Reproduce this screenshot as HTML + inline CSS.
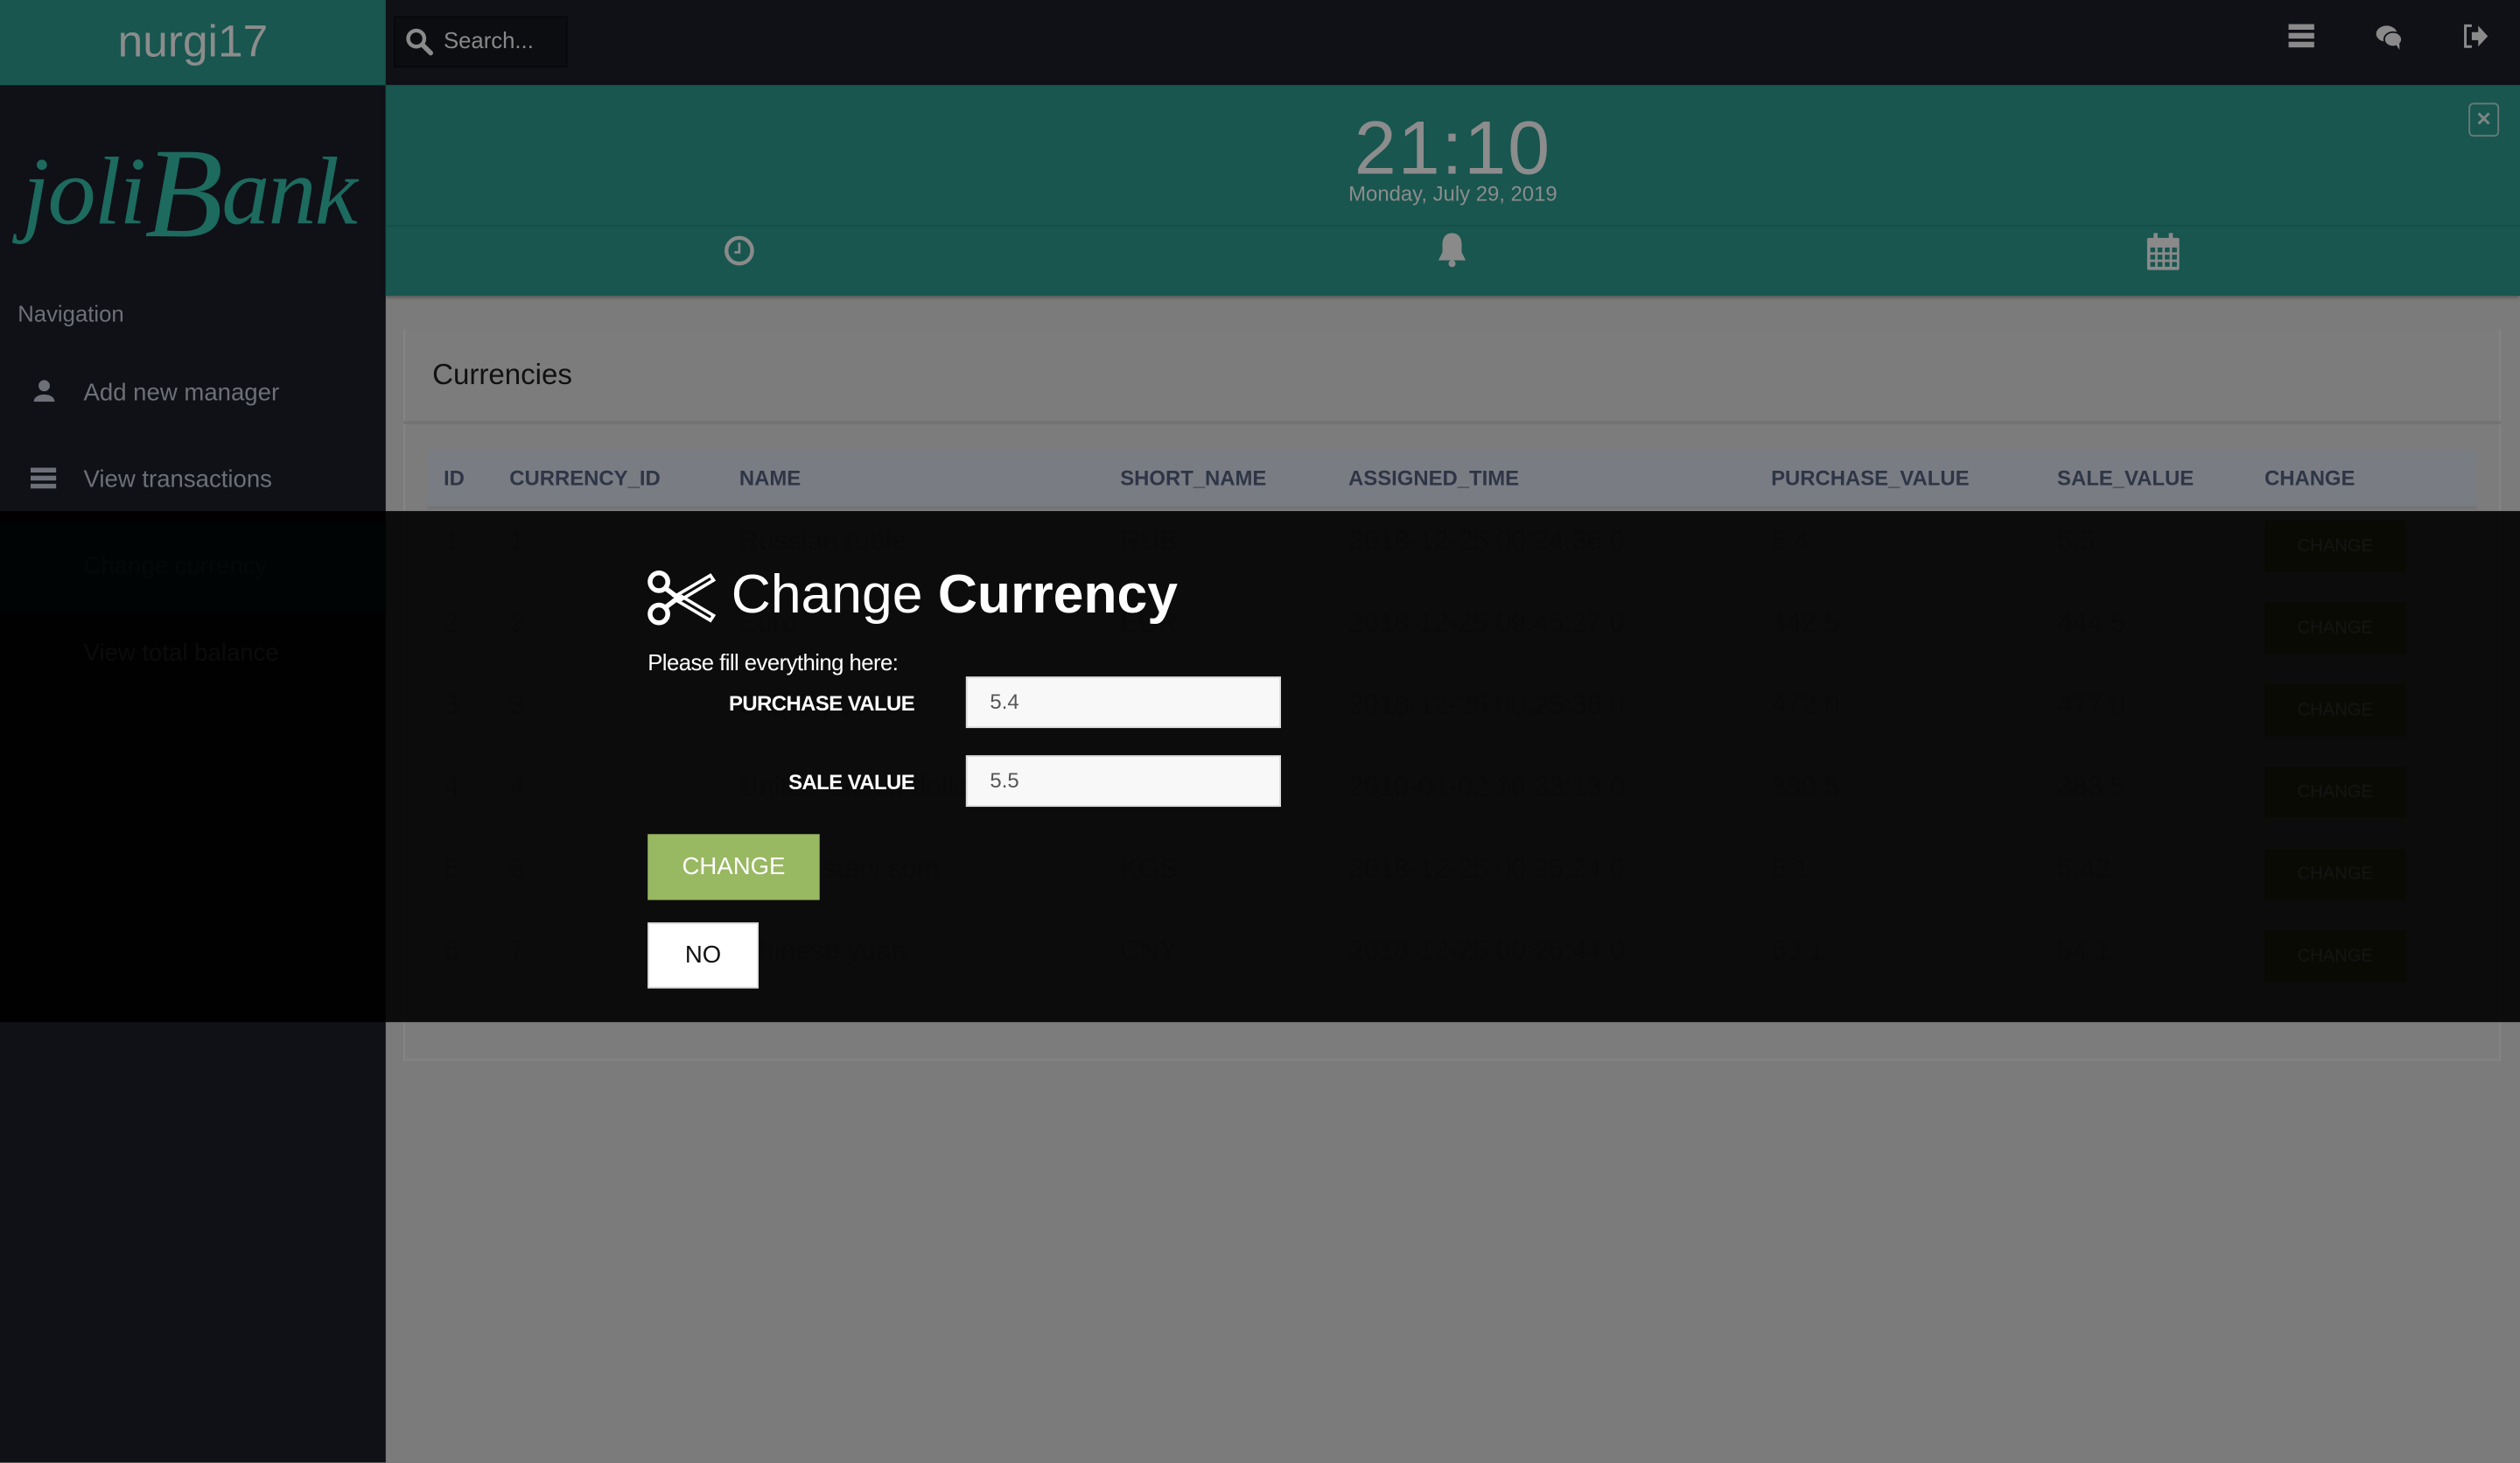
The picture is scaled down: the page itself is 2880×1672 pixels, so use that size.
<!DOCTYPE html>
<html><head><meta charset="utf-8"><style>
html,body{margin:0;padding:0;width:2880px;height:1672px;overflow:hidden;background:#7b7b7b}
#s{position:absolute;left:0;top:0;width:1568px;height:910px;transform:scale(1.836735);transform-origin:0 0;font-family:"Liberation Sans",sans-serif;background:#7b7b7b;overflow:hidden}
.a{position:absolute}
.side{left:0;top:0;width:240px;height:910px;background:#0f1117}
.nav{color:#6e7079;font-size:14px}
.hd{font-weight:bold;font-size:13px;color:#2e3547;top:290px}
.rw{font-size:17px;color:#0a0a0a}
.cb{width:88px;height:32px;background:#0a0a05;color:#141414;font-size:11px;text-align:center;line-height:32px}
</style></head><body><div id="s">
<div class="a side"></div>
<div class="a" style="left:0;top:0;width:240px;height:53px;background:#18564f;color:#8c8c8c;font-size:28px;text-align:center;line-height:52px">nurgi17</div>
<div class="a" style="left:240px;top:0;width:1328px;height:53px;background:#0f1117"></div>
<div class="a" style="left:245px;top:10px;width:108px;height:32px;background:#0b0d11;border:1px solid #07080b;box-sizing:border-box"></div>
<svg class="a" style="left:252px;top:17px" width="18" height="18" viewBox="0 0 18 18"><circle cx="7" cy="7" r="5" fill="none" stroke="#8a8a8a" stroke-width="2.4"/><path d="M11 11l5 5" stroke="#8a8a8a" stroke-width="3" stroke-linecap="round"/></svg>
<div class="a" style="left:276px;top:17px;color:#888;font-size:14px">Search...</div>
<svg class="a" style="left:1424px;top:15px" width="16" height="15"><rect x="0" y="0" width="16" height="3.5" fill="#8a8a8a"/><rect x="0" y="5.5" width="16" height="3.5" fill="#8a8a8a"/><rect x="0" y="11" width="16" height="3.5" fill="#8a8a8a"/></svg>
<svg class="a" style="left:1478px;top:15px" width="17" height="16"><ellipse cx="7" cy="6" rx="6.5" ry="5" fill="#8a8a8a"/><ellipse cx="11" cy="9.5" rx="5.5" ry="4.5" fill="#8a8a8a" stroke="#0f1117"/><path d="M13 13l2 3 0-4z" fill="#8a8a8a"/></svg>
<svg class="a" style="left:1533px;top:15px" width="15" height="15"><path d="M5 1H1v13h4" fill="none" stroke="#8a8a8a" stroke-width="1.6"/><path d="M5 5h4V1l6 6.5-6 6.5V10H5z" fill="#8a8a8a"/></svg>
<div class="a" style="left:14px;top:68px;color:#1d6a5f;font-family:'Liberation Serif',serif;font-style:italic;font-size:60px;letter-spacing:-1px">joli<span style="font-size:80px;position:relative;top:8px">B</span>ank</div>
<div class="a nav" style="left:11px;top:187px">Navigation</div>
<svg class="a" style="left:21px;top:236px" width="13" height="14"><circle cx="6.5" cy="4" r="3.5" fill="#6e7079"/><path d="M0 14c0-6 13-6 13 0z" fill="#6e7079"/></svg>
<div class="a nav" style="left:52px;top:236px;font-size:15px">Add new manager</div>
<svg class="a" style="left:19px;top:291px" width="16" height="13"><rect y="0" width="16" height="3" fill="#6e7079"/><rect y="5" width="16" height="3" fill="#6e7079"/><rect y="10" width="16" height="3" fill="#6e7079"/></svg>
<div class="a nav" style="left:52px;top:290px;font-size:15px">View transactions</div>
<div class="a" style="left:0;top:326px;width:240px;height:54px;background:#10302c"></div>
<div class="a nav" style="left:52px;top:344px;font-size:15px;color:#1f5a52">Change currency</div>
<div class="a nav" style="left:52px;top:398px;font-size:15px">View total balance</div>
<div class="a" style="left:240px;top:53px;width:1328px;height:131px;background:#18564f;box-shadow:0 1px 2px rgba(0,0,0,.3)"></div>
<div class="a" style="left:240px;top:140px;width:1328px;height:1px;background:#145049"></div>
<div class="a" style="left:240px;top:64px;width:1328px;text-align:center;color:#8c8c8c;font-size:47px;letter-spacing:1px">21:10</div>
<div class="a" style="left:240px;top:113px;width:1328px;text-align:center;color:#8c8c8c;font-size:13px">Monday, July 29, 2019</div>
<div class="a" style="left:1536px;top:64px;width:19px;height:21px;border:1px solid #6a7a77;border-radius:3px;box-sizing:border-box;color:#7a8583;font-size:12px;text-align:center;line-height:18px;font-weight:bold">✕</div>
<svg class="a" style="left:450px;top:146px" width="20" height="20"><circle cx="10" cy="10" r="8" fill="none" stroke="#8a8a8a" stroke-width="2.4"/><path d="M10 5v6H7" fill="none" stroke="#8a8a8a" stroke-width="1.5"/></svg>
<svg class="a" style="left:893px;top:144px" width="21" height="24"><path d="M10.5 1c-4 0-6 3-6 7v5L2 18h17l-2.5-5V8c0-4-2-7-6-7z" fill="#8a8a8a"/><circle cx="10.5" cy="20" r="2.2" fill="#8a8a8a"/></svg>
<svg class="a" style="left:1335px;top:144px" width="22" height="25"><rect x="1" y="4" width="20" height="20" rx="1" fill="#8a8a8a"/><rect x="5" y="1" width="2.5" height="6" fill="#8a8a8a"/><rect x="14.5" y="1" width="2.5" height="6" fill="#8a8a8a"/><g fill="#18564f"><rect x="3" y="10" width="3" height="3"/><rect x="7.5" y="10" width="3" height="3"/><rect x="12" y="10" width="3" height="3"/><rect x="16.5" y="10" width="3" height="3"/><rect x="3" y="14.5" width="3" height="3"/><rect x="7.5" y="14.5" width="3" height="3"/><rect x="12" y="14.5" width="3" height="3"/><rect x="16.5" y="14.5" width="3" height="3"/><rect x="3" y="19" width="3" height="3"/><rect x="7.5" y="19" width="3" height="3"/><rect x="12" y="19" width="3" height="3"/><rect x="16.5" y="19" width="3" height="3"/></g></svg>
<div class="a" style="left:251px;top:205px;width:1305px;height:455px;border:1px solid #858585;border-top:none;box-sizing:border-box;background:#7c7c7c"></div>
<div class="a" style="left:251px;top:262px;width:1305px;height:2px;background:#737373"></div>
<div class="a" style="left:269px;top:223px;font-size:18px;color:#111">Currencies</div>
<div class="a" style="left:266px;top:280px;width:1275px;height:35px;background:#797c82;border-bottom:2px solid #737373"></div>
<div class="a hd" style="left:276px">ID</div><div class="a hd" style="left:317px">CURRENCY_ID</div><div class="a hd" style="left:460px">NAME</div><div class="a hd" style="left:697px">SHORT_NAME</div><div class="a hd" style="left:839px">ASSIGNED_TIME</div><div class="a hd" style="left:1102px">PURCHASE_VALUE</div><div class="a hd" style="left:1280px">SALE_VALUE</div><div class="a hd" style="left:1409px">CHANGE</div>
<div class="a" style="left:0;top:318px;width:1568px;height:318px;background:rgba(0,0,0,.9)"></div>
<div class="a rw" style="left:276px;top:327px">1</div><div class="a rw" style="left:317px;top:327px">1</div><div class="a rw" style="left:460px;top:327px">Russian ruble</div><div class="a rw" style="left:697px;top:327px">RUB</div><div class="a rw" style="left:839px;top:327px">2018-12-25 00:24:36.0</div><div class="a rw" style="left:1102px;top:327px">5.4</div><div class="a rw" style="left:1280px;top:327px">5.5</div><div class="a cb" style="left:1409px;top:324px">CHANGE</div>
<div class="a rw" style="left:276px;top:378px">2</div><div class="a rw" style="left:317px;top:378px">2</div><div class="a rw" style="left:460px;top:378px">Euro</div><div class="a rw" style="left:697px;top:378px">EUR</div><div class="a rw" style="left:839px;top:378px">2018-12-25 09:45:27.0</div><div class="a rw" style="left:1102px;top:378px">442.5</div><div class="a rw" style="left:1280px;top:378px">444.5</div><div class="a cb" style="left:1409px;top:375px">CHANGE</div>
<div class="a rw" style="left:276px;top:429px">3</div><div class="a rw" style="left:317px;top:429px">3</div><div class="a rw" style="left:460px;top:429px">British pound</div><div class="a rw" style="left:697px;top:429px">GBP</div><div class="a rw" style="left:839px;top:429px">2018-12-25 00:25:38.0</div><div class="a rw" style="left:1102px;top:429px">472.0</div><div class="a rw" style="left:1280px;top:429px">477.0</div><div class="a cb" style="left:1409px;top:426px">CHANGE</div>
<div class="a rw" style="left:276px;top:480px">4</div><div class="a rw" style="left:317px;top:480px">4</div><div class="a rw" style="left:460px;top:480px">United States dollar</div><div class="a rw" style="left:697px;top:480px">USD</div><div class="a rw" style="left:839px;top:480px">2019-01-02 16:33:13.0</div><div class="a rw" style="left:1102px;top:480px">380.5</div><div class="a rw" style="left:1280px;top:480px">383.5</div><div class="a cb" style="left:1409px;top:477px">CHANGE</div>
<div class="a rw" style="left:276px;top:531px">5</div><div class="a rw" style="left:317px;top:531px">6</div><div class="a rw" style="left:460px;top:531px">Kyrgyzstani som</div><div class="a rw" style="left:697px;top:531px">KGS</div><div class="a rw" style="left:839px;top:531px">2018-12-25 00:26:24.0</div><div class="a rw" style="left:1102px;top:531px">5.1</div><div class="a rw" style="left:1280px;top:531px">5.42</div><div class="a cb" style="left:1409px;top:528px">CHANGE</div>
<div class="a rw" style="left:276px;top:582px">6</div><div class="a rw" style="left:317px;top:582px">7</div><div class="a rw" style="left:460px;top:582px">Chinese yuan</div><div class="a rw" style="left:697px;top:582px">CNY</div><div class="a rw" style="left:839px;top:582px">2018-12-25 00:26:44.0</div><div class="a rw" style="left:1102px;top:582px">53.1</div><div class="a rw" style="left:1280px;top:582px">54.1</div><div class="a cb" style="left:1409px;top:579px">CHANGE</div>
<svg class="a" style="left:402px;top:354px" width="44" height="36" viewBox="0 0 44 36"><circle cx="8" cy="8" r="5.5" fill="none" stroke="#fff" stroke-width="3"/><circle cx="8" cy="28" r="5.5" fill="none" stroke="#fff" stroke-width="3"/><path d="M12 12L20 18L12 24" fill="none" stroke="#fff" stroke-width="3"/><path d="M18 17L40 4L42 7L22 19z" fill="none" stroke="#fff" stroke-width="2"/><path d="M18 19L40 32L42 29L22 17z" fill="none" stroke="#fff" stroke-width="2"/><circle cx="20" cy="18" r="1.5" fill="#fff"/></svg>
<div class="a" style="left:455px;top:351px;color:#fff;font-size:34px;white-space:nowrap">Change <b>Currency</b></div>
<div class="a" style="left:403px;top:404px;color:#fff;font-size:14px;letter-spacing:-.3px">Please fill everything here:</div>
<div class="a" style="left:403px;top:430px;width:166px;text-align:right;color:#fff;font-size:13px;font-weight:bold;letter-spacing:-.3px">PURCHASE VALUE</div>
<div class="a" style="left:403px;top:479px;width:166px;text-align:right;color:#fff;font-size:13px;font-weight:bold;letter-spacing:-.3px">SALE VALUE</div>
<div class="a" style="left:601px;top:421px;width:196px;height:32px;background:#f8f8f8;border:1px solid #ddd;box-sizing:border-box;color:#555;font-size:13px;padding-left:14px;line-height:30px">5.4</div>
<div class="a" style="left:601px;top:470px;width:196px;height:32px;background:#f8f8f8;border:1px solid #ddd;box-sizing:border-box;color:#555;font-size:13px;padding-left:14px;line-height:30px">5.5</div>
<div class="a" style="left:403px;top:519px;width:107px;height:41px;background:#98b862;color:#fff;font-size:15px;text-align:center;line-height:41px">CHANGE</div>
<div class="a" style="left:403px;top:574px;width:69px;height:41px;background:#fff;border:1px solid #ddd;box-sizing:border-box;color:#111;font-size:15px;text-align:center;line-height:39px">NO</div>
</div></body></html>
